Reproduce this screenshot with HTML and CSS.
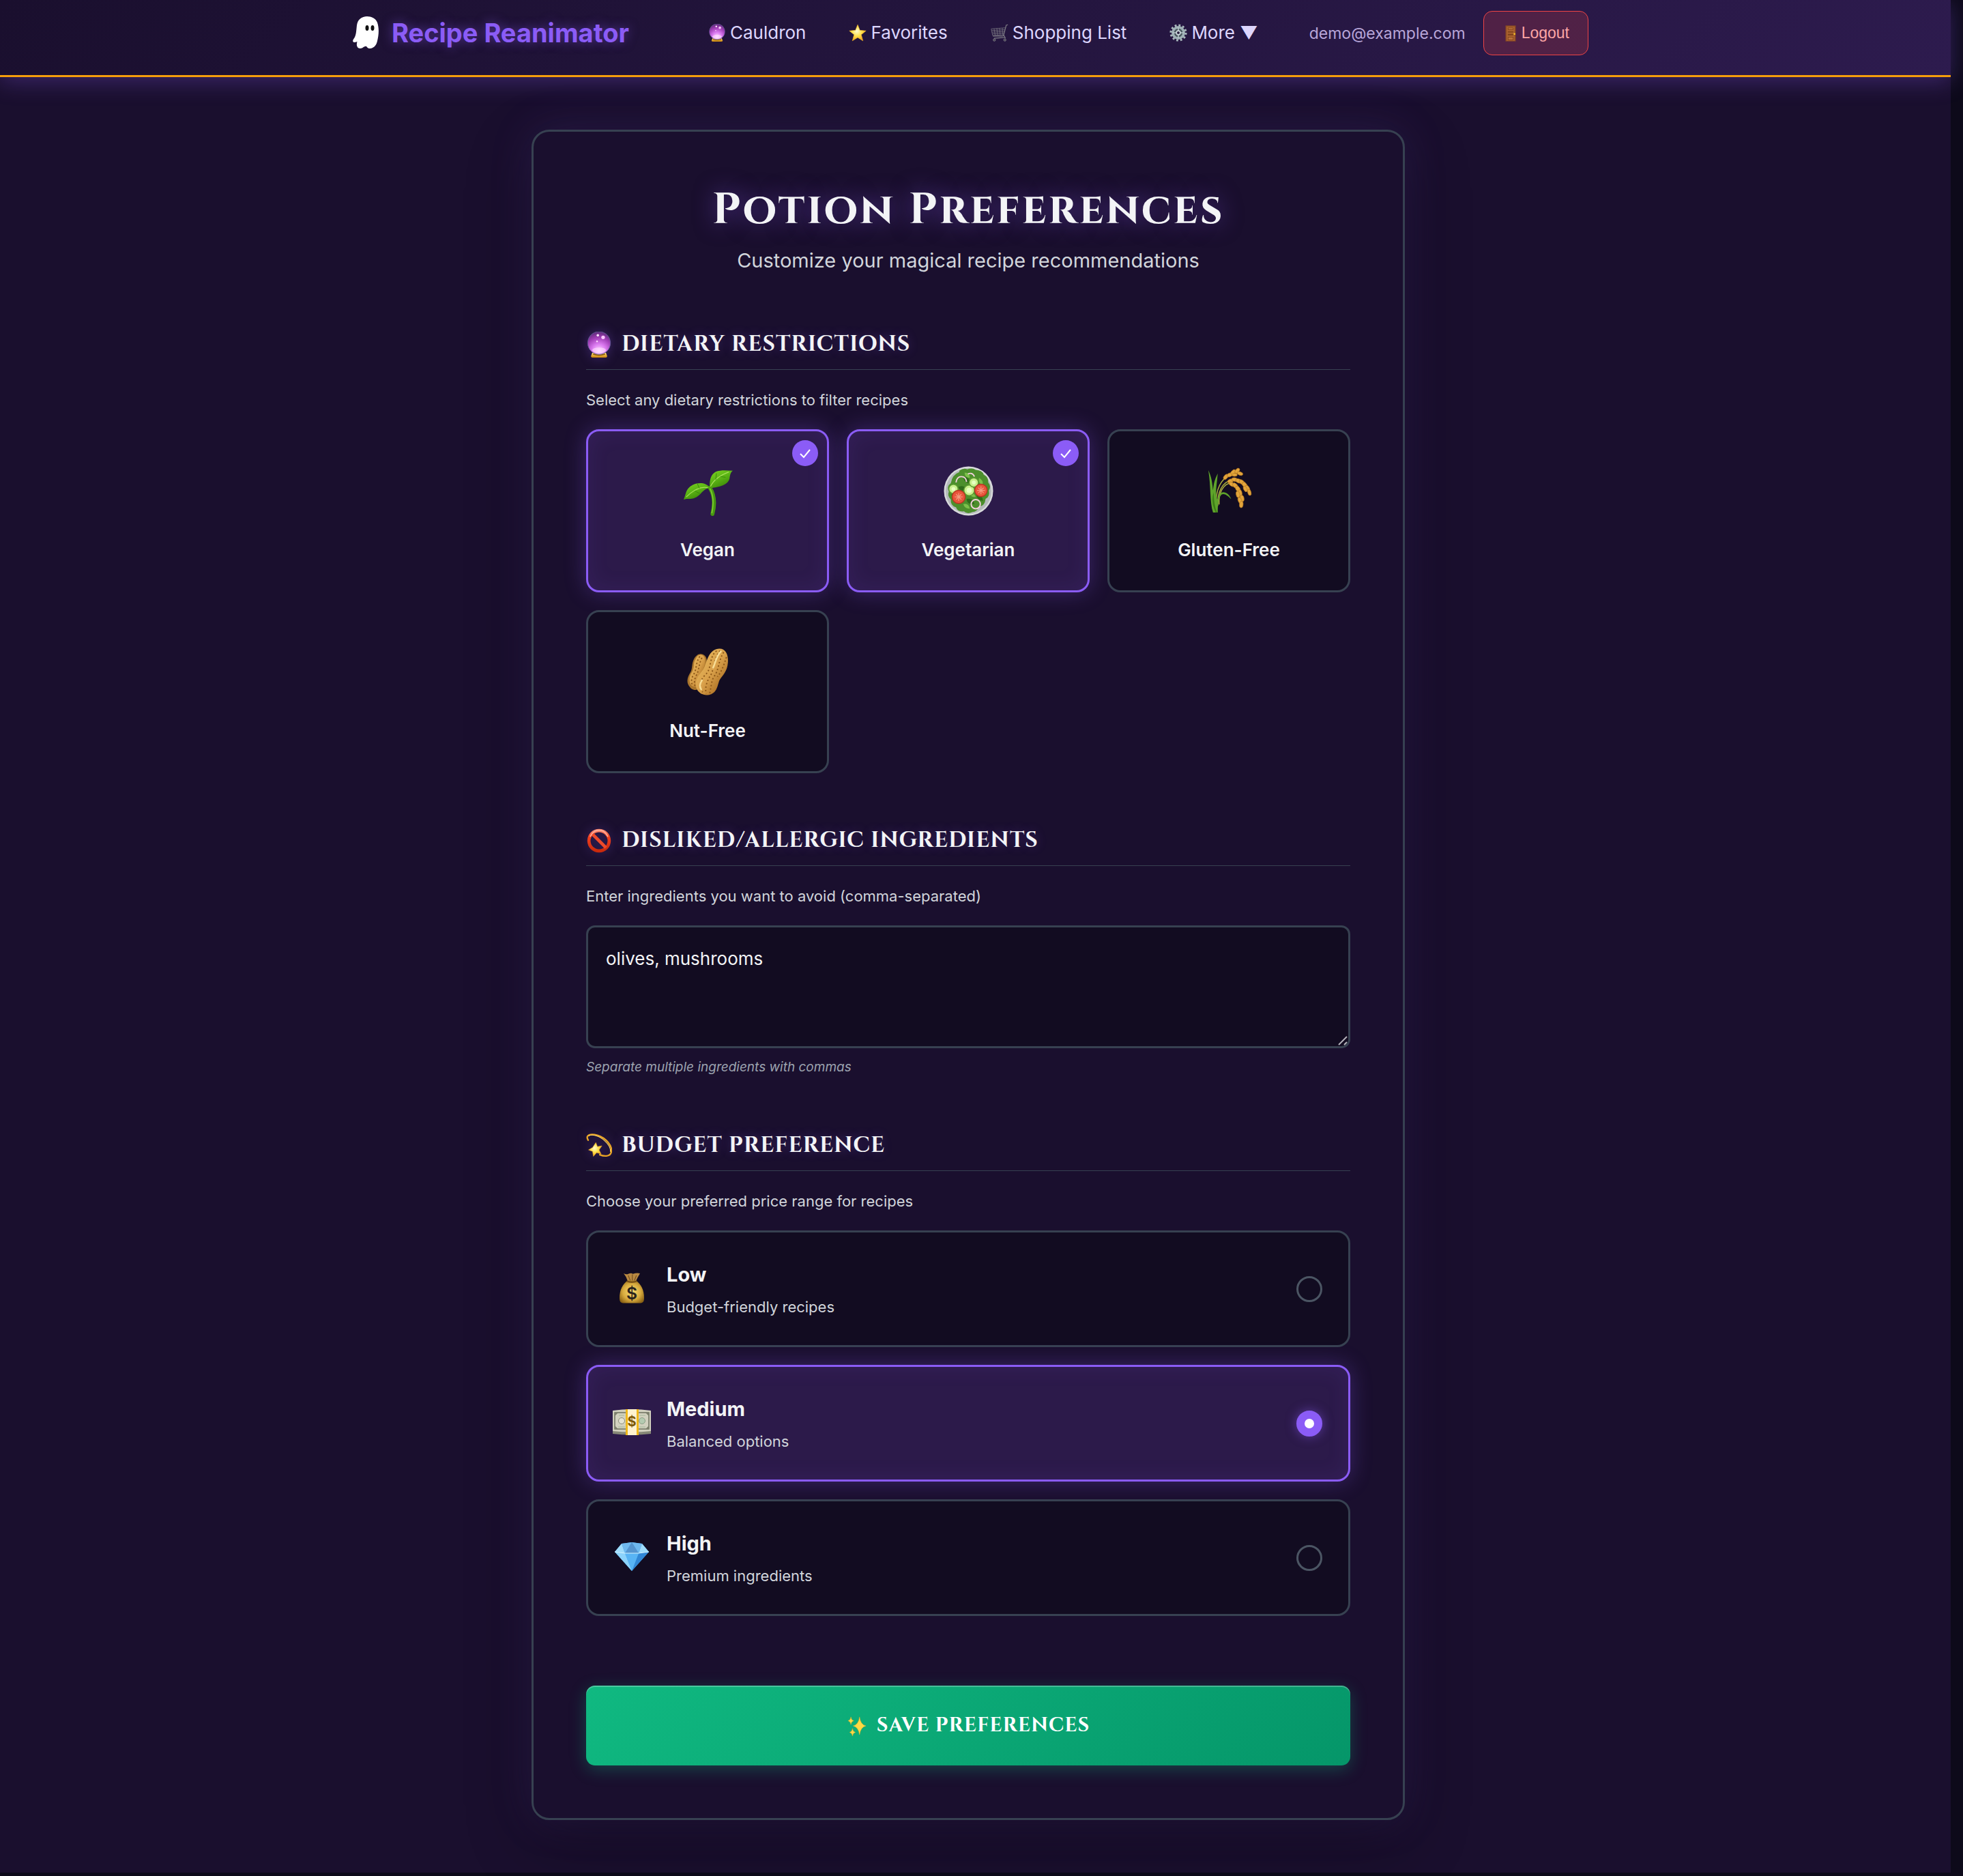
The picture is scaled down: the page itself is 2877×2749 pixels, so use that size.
FILE: index.html
```html
<!DOCTYPE html>
<html lang="en">
<head>
<meta charset="utf-8">
<meta name="viewport" content="width=device-width, initial-scale=1">
<title>Recipe Reanimator – Potion Preferences</title>
<link rel="stylesheet" href="styles.css">
</head>
<body>
<svg class="sprite" aria-hidden="true">
  <defs>
    <radialGradient id="orb" cx=".5" cy=".85" r=".85"><stop offset="0" stop-color="#ffd9ff"/><stop offset=".35" stop-color="#dd7df2"/><stop offset=".7" stop-color="#a03db5"/><stop offset="1" stop-color="#5c2b78"/></radialGradient>
    <linearGradient id="gold" x1="0" y1="0" x2="0" y2="1"><stop offset="0" stop-color="#ffe27a"/><stop offset="1" stop-color="#c98208"/></linearGradient>
    <radialGradient id="starfill" cx=".45" cy=".4" r=".6"><stop offset="0" stop-color="#fffbd0"/><stop offset=".5" stop-color="#ffe14d"/><stop offset="1" stop-color="#f2a31b"/></radialGradient>
    <linearGradient id="leaf" x1="0" y1="0" x2=".6" y2="1"><stop offset="0" stop-color="#7ed321"/><stop offset=".5" stop-color="#5bb515"/><stop offset="1" stop-color="#3b8508"/></linearGradient>
    <linearGradient id="nut" x1="0" y1="0" x2="1" y2="1"><stop offset="0" stop-color="#e9bd60"/><stop offset=".5" stop-color="#d9a04a"/><stop offset="1" stop-color="#93560f"/></linearGradient>
    <radialGradient id="bag" cx=".5" cy=".5" r=".6"><stop offset="0" stop-color="#f6dc72"/><stop offset=".6" stop-color="#d8ab3e"/><stop offset="1" stop-color="#8b6214"/></radialGradient>
    <linearGradient id="red" x1="0" y1="0" x2="0" y2="1"><stop offset="0" stop-color="#ff8a70"/><stop offset=".3" stop-color="#f0401f"/><stop offset="1" stop-color="#c92a0c"/></linearGradient>
  </defs>
  <symbol id="ghost" viewBox="0 0 38 47"><path fill="#fff" d="M21 0C13 0 7 5 6 13 5 22 5 28 2 32-1 36 0 38 3 38 4 38 6 37 6.500 37 5 42 6 47 11 47 15 47 17 43 20 44 22 47 24 47 26 47 32 46 35 41 36 36 38 28 39 18 36 9 34 3 27 0 21 0Z"/><ellipse cx="21" cy="17" rx="2.500" ry="4" fill="#111"/><ellipse cx="29" cy="17" rx="2.500" ry="4" fill="#111"/></symbol>
  <symbol id="crystal" viewBox="0 0 64 64"><path fill="url(#gold)" d="M15 52h34l3 8q0 4-5 4H17q-5 0-5-4z"/><path fill="#8a5a0a" d="M18 54q14 6 28 0l1 3q-15 5-30 0z"/><circle cx="32" cy="28" r="28" fill="url(#orb)" stroke="#66609a" stroke-width="1.500"/><circle cx="29" cy="9" r="3" fill="#ffe9ff"/><circle cx="42" cy="14" r="4.500" fill="#f9c7ff"/><circle cx="27" cy="24" r="2" fill="#ffd9ff"/><ellipse cx="32" cy="46" rx="17" ry="7" fill="#ffe0ff" opacity=".6"/></symbol>
  <symbol id="star" viewBox="0 0 64 64"><path fill="url(#starfill)" stroke="#f4b52a" stroke-width="1.500" stroke-linejoin="round" d="M32 3l8 20 22 2-17 14 6 22-19-12-19 12 6-22L2 25l22-2z"/></symbol>
  <symbol id="cart" viewBox="0 0 64 64"><g fill="none" stroke="#7d7b85" stroke-width="3"><path d="M62 3l-6 2-9 34q-1 5-6 5H8M12 52l38-3M47 40l6 12"/><path stroke-width="1.800" d="M54 14L2 18l5 24 40-3M3 24l48-3M4 30l46-3M6 36l42-3M12 17l4 24M22 16l3 24M32 15l2 24M42 15l1 24"/></g><g fill="#3b3943" stroke="#94929c" stroke-width="2"><circle cx="13" cy="58" r="4"/><circle cx="51" cy="58" r="4"/></g></symbol>
  <symbol id="gear" viewBox="0 0 64 64"><circle cx="32" cy="32" r="27" fill="none" stroke="#a9b8bd" stroke-width="8" stroke-dasharray="7 7.137"/><circle cx="32" cy="32" r="20" fill="#4a5860" stroke="#9fb0b6" stroke-width="9"/><path stroke="#b7c5ca" stroke-width="4" d="M32 12v40M12 32h40"/><circle cx="32" cy="32" r="7" fill="#2a2140" stroke="#cdd9dd" stroke-width="4"/></symbol>
  <symbol id="door" viewBox="0 0 64 64"><path fill="#8a4a22" d="M12 1h40v62H12z"/><path fill="#a9622f" d="M16 5h32v56H16z"/><path fill="#7b3f1a" d="M21 9h22v9H21zM21 24h22v4H21zM21 34h22v5H21zM21 45h22v13H21z"/><path fill="#b8703a" d="M23 11h18v5H23zM23 47h18v9H23z"/><circle cx="47" cy="34" r="3.500" fill="#ffc928"/></symbol>
  <symbol id="sprout" viewBox="0 0 76 76"><path d="M41 33C48 44 49 58 45 73" fill="none" stroke="#469711" stroke-width="6" stroke-linecap="round"/><path d="M41 34C47 45 47 57 44 72" fill="none" stroke="#79c92b" stroke-width="2"/><path fill="url(#leaf)" d="M41 34C40 20 43 8 57 7c6-1 12 0 19 0-4 3-4 7-5 12-3 12-20 13-30 15z"/><path fill="url(#leaf)" d="M41 33C33 22 16 26 10 32 4 37 4 45 1 51c6-2 11 0 16-2 12-5 12-14 24-16z"/><path d="M42 31C48 19 59 13 70 9M38 33C27 30 14 38 5 47" fill="none" stroke="#a8df5a" stroke-width="1.300"/><path d="M50 21l1-10M57 16l8 1M25 34l-3-7M18 38l8 4" fill="none" stroke="#3a8a0b" stroke-width="1"/></symbol>
  <symbol id="salad" viewBox="0 0 76 76"><circle cx="38" cy="38" r="37.500" fill="#d8dadc"/><circle cx="38" cy="38" r="35" fill="#b5babb"/><path fill="#4c8f2c" d="M24 7q7-5 12-2 8-3 13 1 10 0 12 7 8 4 7 12 5 6 1 12 2 10-5 13-1 11-10 12-3 8-10 8-8 4-13-1-10 1-12-6-9-3-8-12-6-6-3-12-4-8 3-13 2-13 13-17z"/><g fill="#2f6b1a"><path d="M30 18q9-4 10 8-8 0-10-8zM46 22q10 2 8 11-10-3-8-11zM22 32q9-5 14 5-10 3-14-5zM35 50q10-2 12 8-12 1-12-8zM50 44q10 0 10 9-9-1-10-9zM12 42q6 0 7 10-7-2-7-10z"/></g><g fill="#7cc04a"><path d="M32 10q8 0 8 8-8 0-8-8zM54 18q8 4 5 12-7-5-5-12zM15 28q7 0 8 8-8-1-8-8zM30 58q8-2 10 7-8 0-10-7zM40 42q7-2 9 5-8 1-9-5z"/></g><g fill="#c9f08e" stroke="#5f9c33" stroke-width="1.500"><circle cx="15" cy="35" r="7"/><circle cx="39" cy="37" r="8"/><circle cx="46" cy="25" r="7"/></g><g fill="#e6ffc0"><circle cx="15" cy="35" r="3"/><circle cx="39" cy="37" r="4"/><circle cx="46" cy="25" r="3"/></g><g fill="#e9553c" stroke="#b93422" stroke-width="1.500"><circle cx="23" cy="47" r="10"/><circle cx="57" cy="37" r="9.500"/></g><path d="M23 41v12M17 47h12M19 43l8 8M27 43l-8 8M57 31v12M51 37h12M53 33l8 8M61 33l-8 8" stroke="#f59a80" stroke-width="1.300"/><g fill="none" stroke="#f3d0dc" stroke-width="2"><circle cx="49" cy="58" r="7"/><path d="M19 25q1-9 8-9t8 8M37 12q7-3 10 4"/></g></symbol>
  <symbol id="rice" viewBox="1 1 74 74"><g fill="none" stroke="#a9ad3d" stroke-width="1.500"><path d="M19 65C17 42 22 26 34 17M21 60C20 40 28 24 42 22M23 58C22 42 28 27 43 25"/></g><path fill="#5ea32a" d="M7 7c5 10 6 20 7 30 1-12 4-19 7-25-1 16-5 30 0 40 1-8 4-13 10-12 5 1 8 5 10 10-5-5-10-9-14-7-5 4-6 15-6 27h-7C9 54 11 30 7 7z"/><path fill="#3c7d17" d="M15 40q0 18 5 30h-2Q10 54 15 40z"/><g fill="#e2a53c" stroke="#b9791f" stroke-width=".7"><ellipse cx="33" cy="17" rx="4.500" ry="2.700" transform="rotate(-50 33 17)"/><ellipse cx="39" cy="14" rx="4.500" ry="2.700" transform="rotate(-20 39 14)"/><ellipse cx="44" cy="10" rx="4.500" ry="2.700" transform="rotate(-45 44 10)"/><ellipse cx="50" cy="8" rx="4.500" ry="2.700" transform="rotate(-50 50 8)"/><ellipse cx="54" cy="12" rx="4.500" ry="2.500" transform="rotate(20 54 12)"/><ellipse cx="46" cy="14" rx="4" ry="2.300"/><ellipse cx="40" cy="23" rx="4.500" ry="2.700" transform="rotate(-20 40 23)"/><ellipse cx="46" cy="21" rx="4.500" ry="2.700" transform="rotate(10 46 21)"/><ellipse cx="52" cy="23" rx="4.500" ry="2.900" transform="rotate(20 52 23)"/><ellipse cx="57" cy="25" rx="4.800" ry="2.900" transform="rotate(40 57 25)"/><ellipse cx="61" cy="29" rx="4.800" ry="3" transform="rotate(55 61 29)"/><ellipse cx="65" cy="34" rx="4.800" ry="2.900" transform="rotate(60 65 34)"/><ellipse cx="68" cy="40" rx="4.800" ry="2.500" transform="rotate(75 68 40)"/><ellipse cx="62" cy="35" rx="4.500" ry="2.500" transform="rotate(65 62 35)"/><ellipse cx="42" cy="28" rx="4.500" ry="2.700" transform="rotate(30 42 28)"/><ellipse cx="47" cy="30" rx="4.800" ry="2.900" transform="rotate(45 47 30)"/><ellipse cx="51" cy="35" rx="4.800" ry="3" transform="rotate(60 51 35)"/><ellipse cx="54" cy="41" rx="4.800" ry="3" transform="rotate(80 54 41)"/><ellipse cx="51" cy="43" rx="4.800" ry="2.700" transform="rotate(80 51 43)"/><ellipse cx="57" cy="49" rx="4.800" ry="3" transform="rotate(80 57 49)"/><ellipse cx="54" cy="52" rx="4.800" ry="2.700" transform="rotate(70 54 52)"/><ellipse cx="56" cy="58" rx="4.800" ry="2.700" transform="rotate(95 56 58)"/></g></symbol>
  <symbol id="peanut" viewBox="5 4 71 70"><path fill="#a8742c" d="M33 14c7 3 7 11 4 18-3 8 0 14-4 22-3 11-13 14-18 7-6-7-4-14 1-22 3-6 1-12 5-19 3-5 7-8 12-6z"/><path fill="url(#nut)" d="M32 15c6 3 5 10 3 17-4 8-2 14-6 22-4 8-9 8-13 3-3-6-2-12 2-18 4-8 1-12 5-18 2-5 5-7 9-6z"/><path fill="url(#nut)" d="M57 6c9 0 13 9 12 20-1 13-8 18-12 25-3 7-3 20-17 21-11 1-20-10-16-21 3-9 9-12 12-20 4-11 8-25 21-25z"/><g fill="none" stroke="#8a5517" stroke-width="1.800" stroke-dasharray="2 3"><path d="M53 9C42 17 46 34 38 42c-7 7-12 15-5 26M58 9C48 20 50 37 43 46c-4 7-7 16-5 24M63 11C55 24 56 38 49 46c-4 7-4 17-6 24M67 18C63 30 60 39 54 46M29 17c-6 8-4 18-9 26-3 5-4 11-1 16M32 19c-5 10-4 18-8 25-3 6-3 10-2 15"/></g><path d="M59 10C52 17 51 27 48 33M32 51c-4 6-3 10-1 13" fill="none" stroke="#f8dd96" stroke-width="2.500" stroke-linecap="round"/></symbol>
  <symbol id="forbidden" viewBox="0 0 64 64"><circle cx="32" cy="32" r="25" fill="none" stroke="url(#red)" stroke-width="8"/><path d="M15 15l34 34" stroke="#ee4a2a" stroke-width="8"/><path d="M10 22Q18 6 32 6t22 16" fill="none" stroke="#ffb09c" stroke-width="2.500"/></symbol>
  <symbol id="dizzy" viewBox="0 0 64 64"><path d="M5 18C-3 4 12 2 28 6c20 6 38 26 34 42-3 12-19 10-28 6" fill="none" stroke="#e9a426" stroke-width="4" stroke-linecap="round"/><path d="M6 8C14 2 34 8 46 20c9 8 15 18 14 27" fill="none" stroke="#ffd868" stroke-width="1.800"/><path fill="url(#starfill)" stroke="#eea822" d="M24 24l4 10 11-2-7 10 5 10-11-3-8 9-2-12-10-4 10-6z"/></symbol>
  <symbol id="gem" viewBox="0 0 50 42"><path fill="#4aa8ec" d="M10 2L25 0l15 2 10 12-25 28L0 14z"/><path fill="#9fdcfb" d="M10 2L0 14l15 2zM40 2l10 12-15 2z"/><path fill="#6fb9ee" d="M10 2L25 0l-10 16zM40 2L25 0l10 16z"/><path fill="#5595cf" d="M25 0L15 16h20z"/><path fill="#8cd3fb" d="M0 14l15 2 10 26z"/><path fill="#3187d5" d="M50 14l-15 2-10 26z"/><path fill="#58b4f4" d="M15 16h20L25 42z"/><path d="M0 14l15 2h20l15-2" fill="none" stroke="#d4f2ff" stroke-width="1"/></symbol>
  <symbol id="sparkles" viewBox="0 0 64 64"><g fill="#ffd944" stroke="#f2ab1d" stroke-width="1"><path d="M40 4q3 24 20 28-17 4-20 28-3-24-20-28 17-4 20-28z"/><path d="M13 4q1 10 9 12-8 2-9 12-1-10-9-12 8-2 9-12z"/><path d="M18 40q1 10 9 12-8 2-9 12-1-10-9-12 8-2 9-12z"/></g></symbol>
</svg>

<header class="site-header">
  <div class="header-inner">
    <a class="brand" href="#"><svg class="brand-mark" aria-hidden="true"><use href="#ghost"/></svg>Recipe Reanimator</a>
    <nav class="nav" aria-label="Main">
      <a class="nav-link" href="#"><svg class="icon-sm" aria-hidden="true"><use href="#crystal"/></svg>Cauldron</a>
      <a class="nav-link" href="#"><svg class="icon-sm" aria-hidden="true"><use href="#star"/></svg>Favorites</a>
      <a class="nav-link" href="#"><svg class="icon-sm" aria-hidden="true"><use href="#cart"/></svg>Shopping List</a>
      <button class="nav-link" type="button"><svg class="icon-sm" aria-hidden="true"><use href="#gear"/></svg>More ▼</button>
    </nav>
    <div class="account">
      <span class="email">demo@example.com</span>
      <button class="logout" type="button"><svg class="icon-door" aria-hidden="true"><use href="#door"/></svg>Logout</button>
    </div>
  </div>
</header>

<main class="page">
  <form class="panel">
    <div class="panel-head">
      <h1 class="title">Potion Preferences</h1>
      <p class="subtitle">Customize your magical recipe recommendations</p>
    </div>

    <section class="section" aria-labelledby="diet-h">
      <h2 class="section-title" id="diet-h"><svg class="icon-md" aria-hidden="true"><use href="#crystal"/></svg>Dietary Restrictions</h2>
      <p class="description">Select any dietary restrictions to filter recipes</p>
      <div class="diet-grid">
        <label class="diet selected"><input class="tick" type="checkbox" name="diet" value="vegan" checked><svg class="icon-lg" aria-hidden="true"><use href="#sprout"/></svg><span class="diet-name">Vegan</span></label>
        <label class="diet selected"><input class="tick" type="checkbox" name="diet" value="vegetarian" checked><svg class="icon-lg" aria-hidden="true"><use href="#salad"/></svg><span class="diet-name">Vegetarian</span></label>
        <label class="diet"><input class="tick" type="checkbox" name="diet" value="gluten-free"><svg class="icon-lg" aria-hidden="true"><use href="#rice"/></svg><span class="diet-name">Gluten-Free</span></label>
        <label class="diet"><input class="tick" type="checkbox" name="diet" value="nut-free"><svg class="icon-lg" aria-hidden="true"><use href="#peanut"/></svg><span class="diet-name">Nut-Free</span></label>
      </div>
    </section>

    <section class="section" aria-labelledby="dislike-h">
      <h2 class="section-title" id="dislike-h"><svg class="icon-md" aria-hidden="true"><use href="#forbidden"/></svg>Disliked/Allergic Ingredients</h2>
      <label class="description" for="disliked">Enter ingredients you want to avoid (comma-separated)</label>
      <textarea class="textbox" id="disliked" name="disliked" aria-describedby="disliked-hint">olives, mushrooms</textarea>
      <p class="hint" id="disliked-hint">Separate multiple ingredients with commas</p>
    </section>

    <section class="section" aria-labelledby="budget-h">
      <h2 class="section-title" id="budget-h"><svg class="icon-md" aria-hidden="true"><use href="#dizzy"/></svg>Budget Preference</h2>
      <p class="description">Choose your preferred price range for recipes</p>
      <div class="budget-list">
        <label class="budget">
          <span class="budget-icon"><svg class="icon-bag" viewBox="0 0 64 64" aria-hidden="true"><path fill="#b98942" d="M16 4q6 3 9 1 6-3 9 0 8-3 14-1-5 8-8 15H24q-2-8-8-15z"/><path d="M25 8l4 10M33 6v12M41 8l-4 10" stroke="#77501e" stroke-width="1.500"/><path fill="url(#bag)" d="M24 18h16c10 7 16 18 16 34 0 7-2 9-7 10H15c-5-1-7-3-7-10 0-16 6-27 16-34z"/><path d="M22 19q10 4 20 0" stroke="#7a5216" stroke-width="3" fill="none"/><text x="32" y="54" text-anchor="middle" font-weight="600" font-size="33" fill="#29231c">$</text></svg></span>
          <span class="budget-text"><span class="budget-name">Low</span><span class="budget-note">Budget-friendly recipes</span></span>
          <input class="dot" type="radio" name="budget" value="low">
        </label>
        <label class="budget selected">
          <span class="budget-icon"><svg class="icon-note" viewBox="0 0 58 38" aria-hidden="true"><path fill="#868877" d="M1 4q28-5 56 0v32q-28 3-56 0z"/><path fill="#d2d1bf" d="M1 2q28-4 56 0v30q-28 3-56 0z"/><path d="M4 5h50v24H4z" fill="none" stroke="#6e705f" stroke-width="1.500"/><path fill="#7c7f6b" d="M4 5h5l-5 5zM4 29h5l-5-5zM54 5h-5l5 5zM54 29h-5l5-5z"/><circle cx="14" cy="17" r="4.500" fill="#e4e3d4" stroke="#8b8d79"/><circle cx="44" cy="17" r="4.500" fill="#b5cbb1" stroke="#8ba086"/><path d="M9 26h10M40 26h9M10 9h8M40 9h9" stroke="#a5b79a" stroke-width="1"/><path fill="#f0b81a" d="M20 0h19v38H20z"/><path fill="#fff3cf" d="M23 0h13v38H23z"/><text x="29" y="25" text-anchor="middle" font-weight="700" font-size="20" fill="#7d5a08">$</text></svg></span>
          <span class="budget-text"><span class="budget-name">Medium</span><span class="budget-note">Balanced options</span></span>
          <input class="dot" type="radio" name="budget" value="medium" checked>
        </label>
        <label class="budget">
          <span class="budget-icon"><svg class="icon-gem" aria-hidden="true"><use href="#gem"/></svg></span>
          <span class="budget-text"><span class="budget-name">High</span><span class="budget-note">Premium ingredients</span></span>
          <input class="dot" type="radio" name="budget" value="high">
        </label>
      </div>
    </section>

    <button class="save" type="submit"><svg class="icon-save" aria-hidden="true"><use href="#sparkles"/></svg>Save Preferences</button>
  </form>
</main>
</body>
</html>
```

FILE: styles.css
```css
:root {
  --night: #1a0f2e;
  --ink: #120c21;
  --purple: #8b5cf6;
  --slate: #374151;
  --text: #f3f4f6;
  --muted: #d1d5db;
  --display: "Cinzel", "Liberation Serif", serif;
  --glow: rgba(139, 92, 246, 0.3);
}

* {
  box-sizing: border-box;
}

body {
  margin: 0;
  padding: 0 18px 5px 0;
  background: #0d0a1a;
  color: var(--text);
  font-family: "Inter", sans-serif;
  font-size: 26px;
}

h1, h2, p {
  margin: 0;
}

button {
  cursor: pointer;
}

.sprite {
  position: absolute;
  width: 0;
  height: 0;
}

/* Header */

.site-header {
  position: relative;
  z-index: 1;
  padding: 16px 21px 29px 0;
  border-bottom: 3px solid #f59e0b;
  background: linear-gradient(135deg, #1a0f2e, #2d1b4e);
  box-shadow: 0 6px 32px var(--glow);
}

.header-inner {
  display: flex;
  align-items: center;
  max-width: 1818px;
  margin: 0 auto;
}

.brand {
  display: flex;
  align-items: center;
  gap: 19px;
  padding: 0 0 2px 7px;
  color: var(--purple);
  font-size: 38px;
  font-weight: 700;
  text-decoration: none;
  text-shadow: 0 0 16px rgba(139, 92, 246, 0.5);
  white-space: nowrap;
}

.brand-mark {
  width: 38px;
  height: 47px;
}

.nav {
  display: flex;
  gap: 63px;
  margin-left: 116px;
}

.nav-link {
  display: flex;
  align-items: center;
  gap: 6px;
  padding: 0 0 2px;
  border: 0;
  background: none;
  color: #ddd6fe;
  font: 400 26px/42px "Inter", sans-serif;
  text-decoration: none;
  white-space: nowrap;
}

.icon-sm {
  width: 26px;
  height: 26px;
}

.account {
  display: flex;
  align-items: center;
  gap: 26px;
  margin-left: auto;
}

.email {
  color: #b8a6d9;
  font-size: 23px;
}

.logout {
  display: flex;
  align-items: center;
  gap: 4px;
  height: 65px;
  padding: 0 27px;
  border: 1px solid #ef4444;
  border-radius: 13px;
  background: rgba(239, 68, 68, 0.2);
  color: #fca5a5;
  font: 400 23px "Liberation Sans", sans-serif;
}

.icon-door {
  width: 24px;
  height: 24px;
}

/* Preferences panel */

.page {
  padding: 77px 21px 77px 0;
  background: var(--night);
}

.panel {
  max-width: 1280px;
  margin: 0 auto;
  padding: 77px;
  border: 3px solid var(--slate);
  border-radius: 26px;
  background: var(--night);
  box-shadow: 0 32px 96px rgba(0, 0, 0, 0.3), 0 0 64px rgba(139, 92, 246, 0.15);
}

.panel-head {
  margin-bottom: 74px;
  text-align: center;
}

.title {
  margin-bottom: 12px;
  font: 700 64px/77px var(--display);
  letter-spacing: 3px;
  text-shadow: 0 0 32px rgba(139, 92, 246, 0.5);
}

.subtitle {
  color: var(--muted);
  font-size: 29px;
  line-height: 46px;
}

.section {
  margin-bottom: 73px;
}

.section-title {
  display: flex;
  align-items: center;
  gap: 14px;
  margin-bottom: 26px;
  padding-bottom: 11px;
  border-bottom: 1px solid var(--slate);
  font: 600 32px/51px var(--display);
  letter-spacing: 1px;
  text-shadow: 0 0 16px var(--glow);
  text-transform: uppercase;
}

.icon-md {
  width: 38px;
  height: 38px;
  filter: drop-shadow(0 0 8px var(--glow));
}

.description {
  display: block;
  margin-bottom: 25px;
  color: var(--muted);
  font-size: 22px;
  line-height: 36px;
}

.diet-grid {
  display: grid;
  grid-template-columns: repeat(3, 1fr);
  gap: 26px;
}

.diet,
.budget {
  position: relative;
  display: flex;
  align-items: center;
  border: 3px solid var(--slate);
  border-radius: 19px;
  background: var(--ink);
  cursor: pointer;
}

.selected {
  border-color: var(--purple);
  background: #2c1a4a;
  box-shadow: 0 0 32px var(--glow), inset 0 0 32px rgba(139, 92, 246, 0.1);
}

.diet {
  flex-direction: column;
  gap: 29px;
  padding: 51px 13px 38px;
}

.icon-lg {
  width: 73px;
  height: 73px;
}

.diet-name {
  font-weight: 600;
  line-height: 42px;
}

.tick,
.dot {
  width: 38px;
  height: 38px;
  margin: 0;
  border-radius: 50%;
  appearance: none;
}

.tick {
  position: absolute;
  top: 13px;
  right: 13px;
}

.tick:checked {
  background: var(--purple) url("data:image/svg+xml,%3Csvg xmlns='http://www.w3.org/2000/svg' viewBox='0 0 38 38'%3E%3Cpath d='M12 20l5 5 9-11' fill='none' stroke='white' stroke-width='2'/%3E%3C/svg%3E");
}

.textbox {
  display: block;
  width: 100%;
  height: 180px;
  padding: 26px;
  border: 3px solid var(--slate);
  border-radius: 13px;
  outline: 0;
  background: var(--ink);
  color: var(--text);
  font: 400 26px/40px "Inter", sans-serif;
  resize: vertical;
}

.textbox::-webkit-resizer {
  background: url("data:image/svg+xml,%3Csvg xmlns='http://www.w3.org/2000/svg' viewBox='0 0 15 15'%3E%3Cpath d='M1 13L13 1M9 13l4-4' stroke='%23b5b3bb' stroke-width='2'/%3E%3C/svg%3E");
}

.hint {
  margin-top: 12px;
  color: #9ca3af;
  font-size: 19px;
  font-style: italic;
  line-height: 32px;
}

.budget-list {
  display: grid;
  gap: 26px;
}

.budget {
  gap: 26px;
  min-height: 171px;
  padding: 0 38px;
}

.budget-icon {
  display: flex;
  justify-content: center;
  width: 51px;
  padding-bottom: 3px;
}

.icon-bag,
.icon-note,
.icon-gem {
  flex: none;
}

.icon-bag {
  width: 48px;
  height: 48px;
}

.icon-note {
  width: 58px;
  height: 38px;
}

.icon-gem {
  width: 50px;
  height: 42px;
}

.budget-text {
  display: flex;
  flex: 1;
  flex-direction: column;
  gap: 6px;
}

.budget-name {
  font-size: 29px;
  font-weight: 700;
  line-height: 46px;
}

.budget-note {
  color: var(--muted);
  font-size: 22px;
  line-height: 36px;
}

.dot {
  border: 3px solid #4b5563;
}

.dot:checked {
  border: 12px solid var(--purple);
  background: #fff;
  box-shadow: 0 0 16px rgba(139, 92, 246, 0.5);
}

.save {
  display: flex;
  align-items: center;
  justify-content: center;
  gap: 14px;
  width: 100%;
  height: 117px;
  margin-top: 102px;
  border: 0;
  border-radius: 13px;
  background: linear-gradient(135deg, #10b981, #059669);
  box-shadow: 0 6px 24px rgba(16, 185, 129, 0.3), inset 0 2px 0 rgba(255, 255, 255, 0.25);
  color: #fff;
  font: 700 29px var(--display);
  letter-spacing: 1px;
  text-transform: uppercase;
}

.icon-save {
  width: 30px;
  height: 30px;
}
```
